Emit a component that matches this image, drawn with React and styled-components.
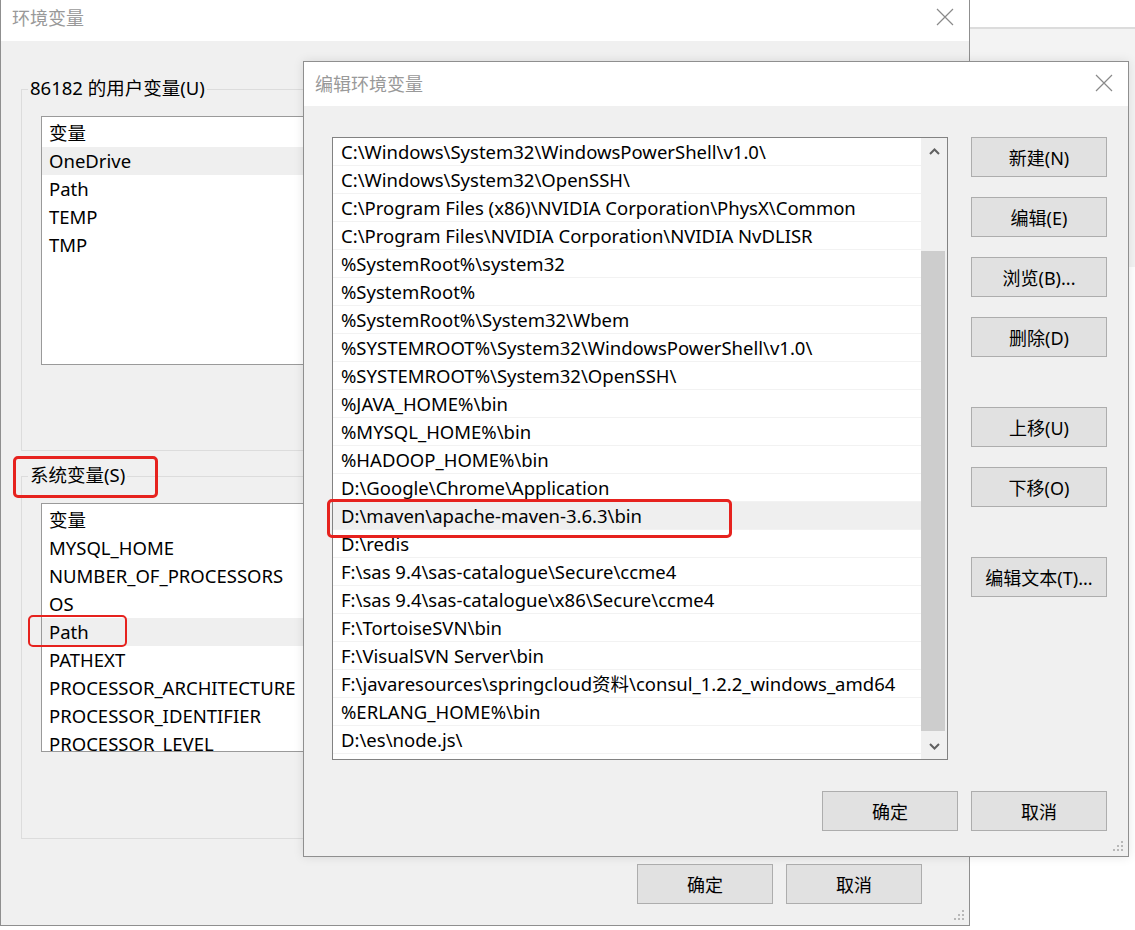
import styled, { createGlobalStyle } from "styled-components";

const GlobalStyle = createGlobalStyle`
  html, body { margin: 0; padding: 0; background: #fff; }
  body {
    font-family: "Noto Sans", "Noto Sans CJK SC", sans-serif;
    font-size: 18px;
    color: #000;
  }
  * { box-sizing: border-box; }
`;

const Desktop = styled.div`
  position: relative;
  width: 1135px;
  height: 930px;
  overflow: hidden;
  background: #fff;
`;

const BackdropWindow = styled.div`
  position: absolute;
  left: 970px;
  top: 27px;
  width: 200px;
  height: 240px;
  background: #f3f3f3;
  border-top: 2px solid #dcdcdc;
`;

const Window = styled.div`
  position: absolute;
  left: ${(p) => p.$x}px;
  top: ${(p) => p.$y}px;
  width: ${(p) => p.$w}px;
  height: ${(p) => p.$h}px;
  display: flex;
  flex-direction: column;
  background: #f0f0f0;
  border: 1px solid #8f8f8f;
  box-shadow: ${(p) => (p.$front ? "0 0 10px rgba(0,0,0,0.10)" : "none")};
`;

const TitleBar = styled.div`
  flex: none;
  height: ${(p) => p.$h}px;
  padding: 0 15px ${(p) => p.$pb || 0}px 11px;
  display: flex;
  align-items: center;
  justify-content: space-between;
  background: #fff;
  color: #999;
  font-size: 18px;
`;

const Close = styled.svg`
  width: 18px;
  height: 18px;
  stroke: #8a8a8a;
  stroke-width: 1.2;
`;

const BackBody = styled.div`
  flex: 1;
  position: relative;
  display: flex;
  flex-direction: column;
  padding-left: 20px;
`;

const Group = styled.div`
  position: relative;
  margin-top: ${(p) => p.$mt}px;
  margin-right: 20px;
  height: ${(p) => p.$h}px;
  padding: 26px 0 0 19px;
  border: 1px solid #dcdcdc;
`;

const GroupLabel = styled.div`
  position: absolute;
  top: -15px;
  left: 6px;
  padding: 0 2px;
  line-height: 26px;
  font-size: 18.5px;
  background: #f0f0f0;
`;

const RedMark = styled.div`
  position: absolute;
  left: ${(p) => p.$l}px;
  top: ${(p) => p.$t}px;
  width: ${(p) => p.$w}px;
  height: ${(p) => p.$h}px;
  border: ${(p) => p.$b || 3}px solid #e6221e;
  border-radius: 5px;
  pointer-events: none;
`;

const ListBox = styled.div`
  width: ${(p) => p.$w}px;
  height: ${(p) => p.$h}px;
  display: flex;
  background: #fff;
  border: 1px solid ${(p) => p.$border || "#9a9a9a"};
  overflow: hidden;
  font-size: 18.5px;
`;

const Rows = styled.div`
  flex: 1;
  min-width: 0;
  display: flex;
  flex-direction: column;
`;

const HeaderRow = styled.div`
  flex: none;
  height: 30px;
  padding-left: 7px;
  display: flex;
  align-items: center;
`;

const Row = styled.div`
  flex: none;
  height: 28px;
  padding: 0 0 1px ${(p) => p.$pl}px;
  display: flex;
  align-items: center;
  white-space: nowrap;
  background: ${(p) => (p.$selected ? "#efefef" : "transparent")};
  border-bottom: ${(p) => (p.$lined ? "1px solid #f2f2f2" : "none")};
`;

const Scrollbar = styled.div`
  flex: none;
  width: 26px;
  display: flex;
  flex-direction: column;
  background: #f0f0f0;
`;

const ArrowButton = styled.div`
  flex: none;
  height: 26px;
  display: flex;
  align-items: center;
  justify-content: center;
  svg {
    width: 11px;
    height: 7px;
    fill: none;
    stroke: #606060;
    stroke-width: 2;
  }
`;

const Track = styled.div`
  flex: 1;
  padding: 87px 2px 0 0;
`;

const Thumb = styled.div`
  height: 480px;
  background: #cdcdcd;
`;

const Footer = styled.div`
  display: flex;
  justify-content: flex-end;
  gap: 13px;
  margin-top: ${(p) => p.$mt}px;
  padding-right: ${(p) => p.$pr}px;
`;

const Button = styled.div`
  flex: none;
  width: 136px;
  height: 40px;
  margin-top: ${(p) => p.$mt || 0}px;
  display: flex;
  align-items: center;
  justify-content: center;
  background: #e1e1e1;
  border: 1px solid #adadad;
  font-size: 18px;
  color: #000;
`;

const FrontBody = styled.div`
  flex: 1;
  position: relative;
  display: flex;
  flex-direction: column;
  padding: 31px 0 0 28px;
`;

const TopArea = styled.div`
  display: flex;
  gap: 23px;
`;

const ButtonColumn = styled.div`
  display: flex;
  flex-direction: column;
  width: 136px;
`;

const Grip = styled.svg`
  position: absolute;
  right: 3px;
  bottom: 3px;
  width: 12px;
  height: 12px;
  fill: #b8b8b8;
`;

const CloseIcon = () => (
  <Close viewBox="0 0 18 18">
    <path d="M1 1 L17 17 M17 1 L1 17" />
  </Close>
);

const ResizeGrip = () => (
  <Grip viewBox="0 0 12 12">
    <rect x="8" y="0" width="2" height="2" />
    <rect x="4" y="4" width="2" height="2" />
    <rect x="8" y="4" width="2" height="2" />
    <rect x="0" y="8" width="2" height="2" />
    <rect x="4" y="8" width="2" height="2" />
    <rect x="8" y="8" width="2" height="2" />
  </Grip>
);

const userVars = ["OneDrive", "Path", "TEMP", "TMP"];
const systemVars = [
  "MYSQL_HOME",
  "NUMBER_OF_PROCESSORS",
  "OS",
  "Path",
  "PATHEXT",
  "PROCESSOR_ARCHITECTURE",
  "PROCESSOR_IDENTIFIER",
  "PROCESSOR_LEVEL",
];
const paths = [
  "C:\\Windows\\System32\\WindowsPowerShell\\v1.0\\",
  "C:\\Windows\\System32\\OpenSSH\\",
  "C:\\Program Files (x86)\\NVIDIA Corporation\\PhysX\\Common",
  "C:\\Program Files\\NVIDIA Corporation\\NVIDIA NvDLISR",
  "%SystemRoot%\\system32",
  "%SystemRoot%",
  "%SystemRoot%\\System32\\Wbem",
  "%SYSTEMROOT%\\System32\\WindowsPowerShell\\v1.0\\",
  "%SYSTEMROOT%\\System32\\OpenSSH\\",
  "%JAVA_HOME%\\bin",
  "%MYSQL_HOME%\\bin",
  "%HADOOP_HOME%\\bin",
  "D:\\Google\\Chrome\\Application",
  "D:\\maven\\apache-maven-3.6.3\\bin",
  "D:\\redis",
  "F:\\sas 9.4\\sas-catalogue\\Secure\\ccme4",
  "F:\\sas 9.4\\sas-catalogue\\x86\\Secure\\ccme4",
  "F:\\TortoiseSVN\\bin",
  "F:\\VisualSVN Server\\bin",
  "F:\\javaresources\\springcloud资料\\consul_1.2.2_windows_amd64",
  "%ERLANG_HOME%\\bin",
  "D:\\es\\node.js\\",
  "",
];

const VarList = ({ items, selected }) => (
  <ListBox $w={880} $h={249}>
    <Rows>
      <HeaderRow>变量</HeaderRow>
      {items.map((name) => (
        <Row key={name} $pl={7} $selected={name === selected}>
          {name}
        </Row>
      ))}
    </Rows>
  </ListBox>
);

export default function App() {
  return (
    <Desktop>
      <GlobalStyle />
      <BackdropWindow />

      <Window $x={0} $y={-1} $w={970} $h={927}>
        <TitleBar $h={41} $pb={7}>
          <span>环境变量</span>
          <CloseIcon />
        </TitleBar>
        <BackBody>
          <Group $mt={48} $h={362}>
            <GroupLabel>86182 的用户变量(U)</GroupLabel>
            <VarList items={userVars} selected="OneDrive" />
          </Group>
          <Group $mt={25} $h={363}>
            <GroupLabel>
              系统变量(S)
              <RedMark $l={-15} $t={-6} $w={145} $h={42} />
            </GroupLabel>
            <VarList items={systemVars} selected="Path" />
            <RedMark $l={6} $t={138} $w={99} $h={32} $b={2} />
          </Group>
          <Footer $mt={25} $pr={47}>
            <Button>确定</Button>
            <Button>取消</Button>
          </Footer>
          <ResizeGrip />
        </BackBody>
      </Window>

      <Window $x={303} $y={61} $w={826} $h={796} $front>
        <TitleBar $h={44} $pb={2}>
          <span>编辑环境变量</span>
          <CloseIcon />
        </TitleBar>
        <FrontBody>
          <TopArea>
            <ListBox $w={616} $h={623} $border="#828282">
              <Rows>
                {paths.map((p, i) => (
                  <Row key={i} $pl={8} $lined $selected={i === 13}>
                    {p}
                  </Row>
                ))}
              </Rows>
              <Scrollbar>
                <ArrowButton>
                  <svg viewBox="0 0 11 7">
                    <path d="M1 6 L5.5 1.5 L10 6" />
                  </svg>
                </ArrowButton>
                <Track>
                  <Thumb />
                </Track>
                <ArrowButton>
                  <svg viewBox="0 0 11 7">
                    <path d="M1 1 L5.5 5.5 L10 1" />
                  </svg>
                </ArrowButton>
              </Scrollbar>
            </ListBox>
            <ButtonColumn>
              <Button>新建(N)</Button>
              <Button $mt={20}>编辑(E)</Button>
              <Button $mt={20}>浏览(B)...</Button>
              <Button $mt={20}>删除(D)</Button>
              <Button $mt={50}>上移(U)</Button>
              <Button $mt={20}>下移(O)</Button>
              <Button $mt={50}>编辑文本(T)...</Button>
            </ButtonColumn>
          </TopArea>
          <Footer $mt={31} $pr={21}>
            <Button>确定</Button>
            <Button>取消</Button>
          </Footer>
          <RedMark $l={23} $t={393} $w={405} $h={39} />
          <ResizeGrip />
        </FrontBody>
      </Window>
    </Desktop>
  );
}
